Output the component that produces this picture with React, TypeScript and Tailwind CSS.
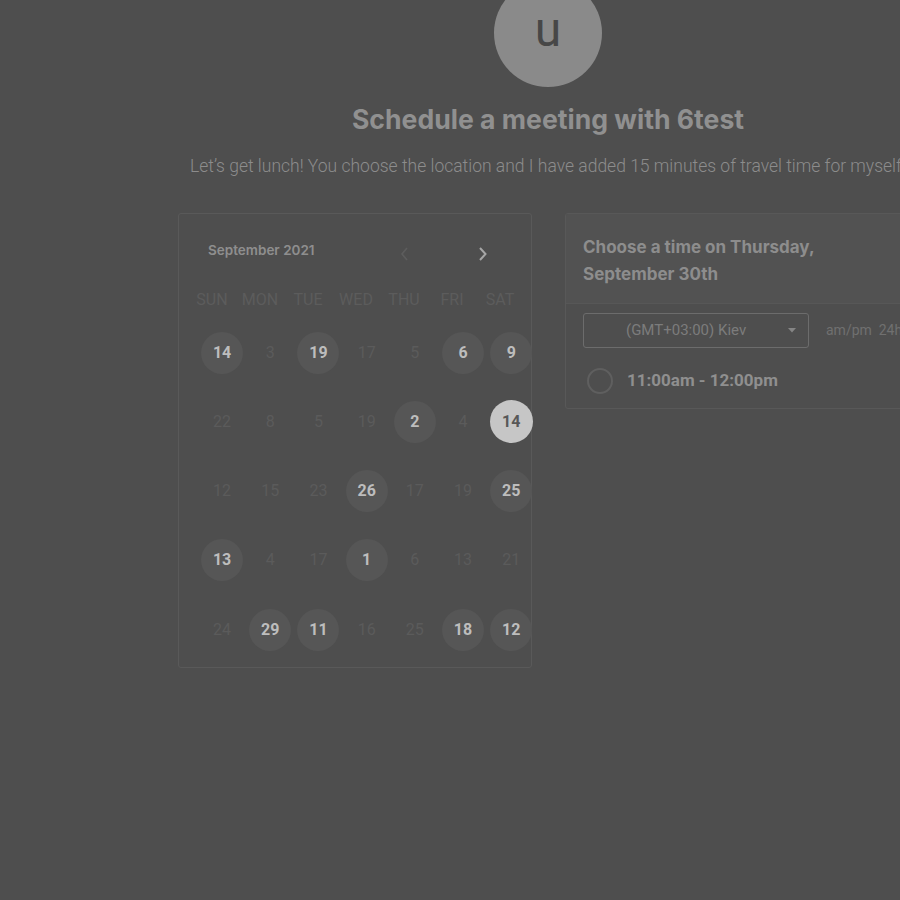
import React from "react";

type Day = { n: number; state?: "open" | "picked" };

const weeks: Day[][] = [
  [{ n: 14, state: "open" }, { n: 3 }, { n: 19, state: "open" }, { n: 17 }, { n: 5 }, { n: 6, state: "open" }, { n: 9, state: "open" }],
  [{ n: 22 }, { n: 8 }, { n: 5 }, { n: 19 }, { n: 2, state: "open" }, { n: 4 }, { n: 14, state: "picked" }],
  [{ n: 12 }, { n: 15 }, { n: 23 }, { n: 26, state: "open" }, { n: 17 }, { n: 19 }, { n: 25, state: "open" }],
  [{ n: 13, state: "open" }, { n: 4 }, { n: 17 }, { n: 1, state: "open" }, { n: 6 }, { n: 13 }, { n: 21 }],
  [{ n: 24 }, { n: 29, state: "open" }, { n: 11, state: "open" }, { n: 16 }, { n: 25 }, { n: 18, state: "open" }, { n: 12, state: "open" }],
];

const weekdays = ["SUN", "MON", "TUE", "WED", "THU", "FRI", "SAT"];

function DayCell({ day }: { day: Day }) {
  if (day.state === "picked") {
    return (
      <div className="flex h-[69.25px] items-center justify-center">
        <div className="flex size-[43px] items-center justify-center rounded-full bg-[#c6c6c6] text-[16px] font-bold text-[#585858]">
          {day.n}
        </div>
      </div>
    );
  }
  if (day.state === "open") {
    return (
      <div className="flex h-[69.25px] items-center justify-center">
        <div className="flex size-[42px] items-center justify-center rounded-full bg-[#565656] text-[16px] font-bold text-[#bdbdbd]">
          {day.n}
        </div>
      </div>
    );
  }
  return (
    <div className="flex h-[69.25px] items-center justify-center text-[16px] text-[#5b5b5b]">
      {day.n}
    </div>
  );
}

function Calendar() {
  return (
    <div className="h-[455px] w-[354px] shrink-0 rounded-[3px] border border-[#595959]">
      <div className="flex h-[70px] items-center pl-[29px] pt-[2px]">
        <span className="font-['Inter',sans-serif] text-[13.5px] font-semibold text-[#8e8e8e]">
          September 2021
        </span>
        <svg className="ml-[84px] mt-[8px]" width="10" height="16" viewBox="0 0 10 16" fill="none">
          <path d="M8 2 L3 8 L8 14" stroke="#5d5d5d" strokeWidth="1.6" />
        </svg>
        <svg className="ml-[69px] mt-[8px]" width="10" height="16" viewBox="0 0 10 16" fill="none">
          <path d="M2 2 L7.5 8 L2 14" stroke="#a6a6a6" strokeWidth="2" />
        </svg>
      </div>
      <div className="ml-[9px] grid h-[32px] grid-cols-[repeat(7,48px)] items-center">
        {weekdays.map((w) => (
          <div key={w} className="text-center text-[16px] text-[#5c5c5c]">
            {w}
          </div>
        ))}
      </div>
      <div className="ml-[19px] mt-[2px] grid grid-cols-[repeat(7,48.2px)]">
        {weeks.flat().map((d, i) => (
          <DayCell key={i} day={d} />
        ))}
      </div>
    </div>
  );
}

function TimePanel() {
  return (
    <div className="h-[196px] w-[354px] shrink-0 overflow-hidden rounded-[3px] border border-[#585858]">
      <div className="h-[90px] border-b border-[#575757] bg-[#525252] pl-[17px] pt-[20px] font-['Inter',sans-serif] text-[17px] font-bold leading-[27px] text-[#8d8d8d]">
        Choose a time on Thursday,
        <br />
        September 30th
      </div>
      <div className="flex items-center pl-[17px] pt-[9px]">
        <div className="flex h-[35px] w-[226px] items-center rounded-[3px] border border-[#6c6c6c] pl-[42px] pr-[12px] text-[15px] text-[#7c7c7c]">
          <span className="flex-1">(GMT+03:00) Kiev</span>
          <svg width="8" height="5" viewBox="0 0 8 5">
            <path d="M0 0 H8 L4 4.5 Z" fill="#858585" />
          </svg>
        </div>
        <span className="ml-[17px] whitespace-nowrap text-[14px] text-[#707070]">
          am/pm&nbsp;&nbsp;24h
        </span>
      </div>
      <div className="flex items-center pl-[21px] pt-[20px]">
        <div className="size-[26px] rounded-full border-2 border-[#5f5f5f]" />
        <span className="ml-[14px] text-[17px] font-bold text-[#8f8f8f]">
          11:00am - 12:00pm
        </span>
      </div>
    </div>
  );
}

export default function App() {
  return (
    <div className="h-[900px] w-[900px] overflow-hidden bg-[#4e4e4e] font-['Roboto',sans-serif]">
      <div className="ml-[178px] flex w-[740px] flex-col items-center">
        <div className="mt-[-21px] flex size-[108px] items-center justify-center rounded-full bg-[#8a8a8a]">
          <span className="mt-[-6px] text-[48px] leading-none text-[#474747]">u</span>
        </div>
        <h1 className="mt-[16px] font-['Inter',sans-serif] text-[26.6px] font-bold leading-[32px] text-[#909090]">
          Schedule a meeting with 6test
        </h1>
        <p className="mt-[21px] whitespace-nowrap text-[17.5px] font-light leading-[20px] text-[#8c8c8c]">
          Let’s get lunch! You choose the location and I have added 15 minutes of travel time for myself.
        </p>
        <div className="mt-[37px] flex w-full items-start gap-[33px]">
          <Calendar />
          <TimePanel />
        </div>
      </div>
    </div>
  );
}
